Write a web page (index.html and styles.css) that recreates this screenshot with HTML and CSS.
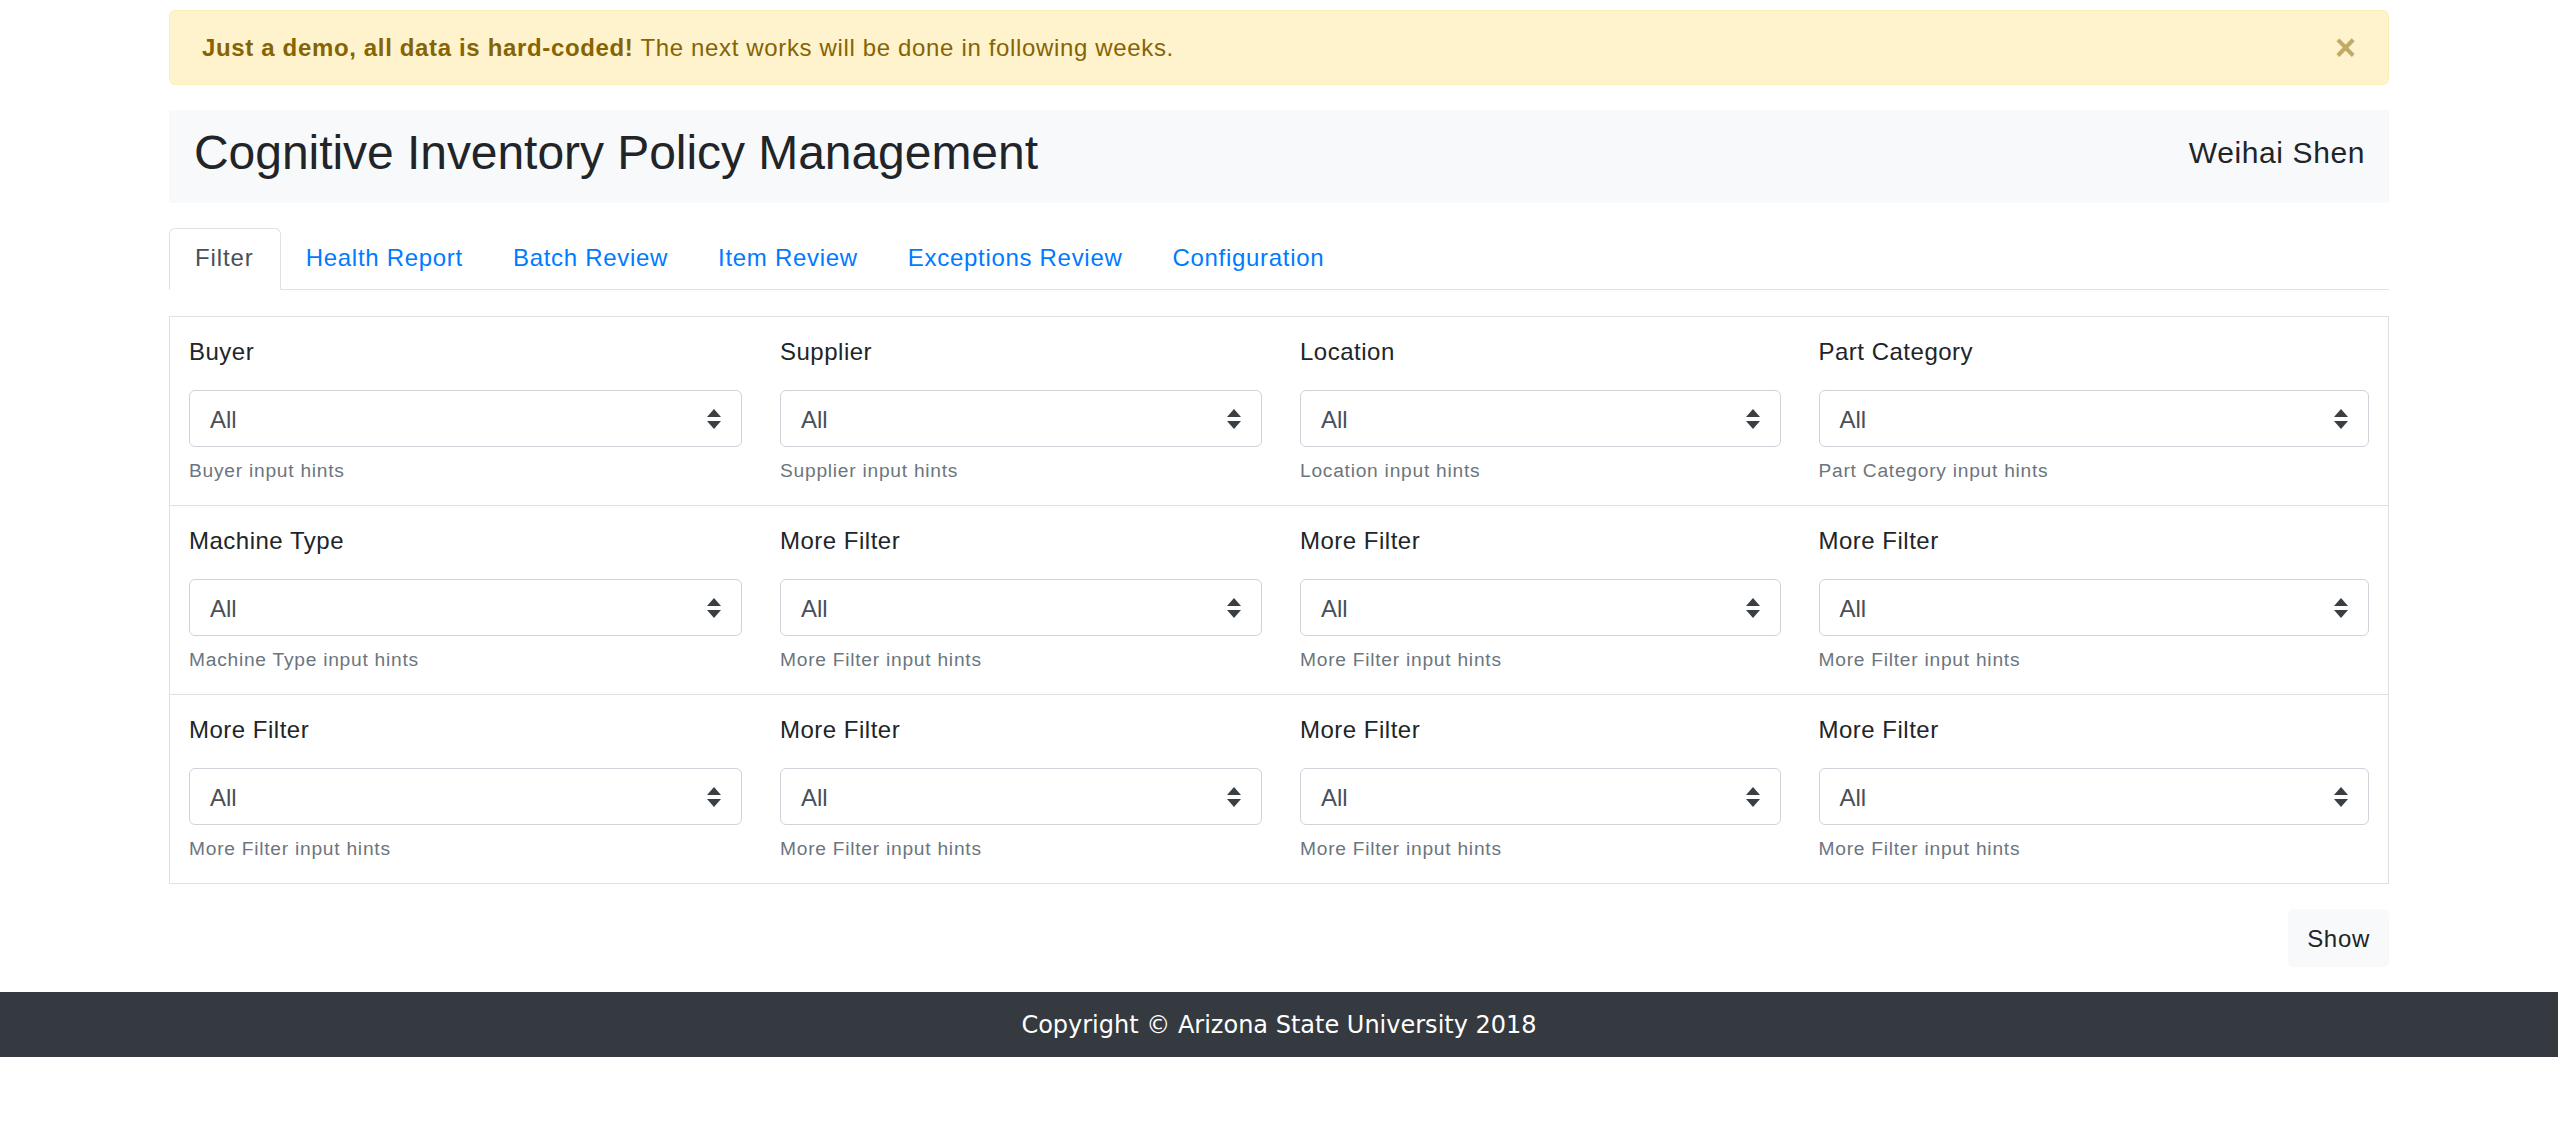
FILE: index.html
```html
<!DOCTYPE html>
<html lang="en">
<head>
<meta charset="utf-8">
<title>Cognitive Inventory Policy Management</title>
<link rel="stylesheet" href="styles.css">
</head>
<body>
<div class="page">
  <div class="container">
    <div class="alert">
      <strong>Just a demo, all data is hard-coded!</strong> The next works will be done in following weeks.
      <span class="close">&times;</span>
    </div>

    <header class="topbar">
      <h2 class="title">Cognitive Inventory Policy Management</h2>
      <span class="user">Weihai Shen</span>
    </header>

    <ul class="tabs">
      <li class="tab active">Filter</li>
      <li class="tab">Health Report</li>
      <li class="tab">Batch Review</li>
      <li class="tab">Item Review</li>
      <li class="tab">Exceptions Review</li>
      <li class="tab">Configuration</li>
    </ul>

    <div class="filters">
      <div class="frow">
        <div class="cell"><div class="lbl">Buyer</div><div class="sel"><span>All</span><svg class="arr" width="16" height="20" viewBox="0 0 16 20"><path d="M8 0L15 8H1Z M8 20L15 12H1Z" fill="#3a3f44"/></svg></div><div class="hint">Buyer input hints</div></div>
        <div class="cell"><div class="lbl">Supplier</div><div class="sel"><span>All</span><svg class="arr" width="16" height="20" viewBox="0 0 16 20"><path d="M8 0L15 8H1Z M8 20L15 12H1Z" fill="#3a3f44"/></svg></div><div class="hint">Supplier input hints</div></div>
        <div class="cell"><div class="lbl">Location</div><div class="sel"><span>All</span><svg class="arr" width="16" height="20" viewBox="0 0 16 20"><path d="M8 0L15 8H1Z M8 20L15 12H1Z" fill="#3a3f44"/></svg></div><div class="hint">Location input hints</div></div>
        <div class="cell"><div class="lbl">Part Category</div><div class="sel"><span>All</span><svg class="arr" width="16" height="20" viewBox="0 0 16 20"><path d="M8 0L15 8H1Z M8 20L15 12H1Z" fill="#3a3f44"/></svg></div><div class="hint">Part Category input hints</div></div>
      </div>
      <div class="frow">
        <div class="cell"><div class="lbl">Machine Type</div><div class="sel"><span>All</span><svg class="arr" width="16" height="20" viewBox="0 0 16 20"><path d="M8 0L15 8H1Z M8 20L15 12H1Z" fill="#3a3f44"/></svg></div><div class="hint">Machine Type input hints</div></div>
        <div class="cell"><div class="lbl">More Filter</div><div class="sel"><span>All</span><svg class="arr" width="16" height="20" viewBox="0 0 16 20"><path d="M8 0L15 8H1Z M8 20L15 12H1Z" fill="#3a3f44"/></svg></div><div class="hint">More Filter input hints</div></div>
        <div class="cell"><div class="lbl">More Filter</div><div class="sel"><span>All</span><svg class="arr" width="16" height="20" viewBox="0 0 16 20"><path d="M8 0L15 8H1Z M8 20L15 12H1Z" fill="#3a3f44"/></svg></div><div class="hint">More Filter input hints</div></div>
        <div class="cell"><div class="lbl">More Filter</div><div class="sel"><span>All</span><svg class="arr" width="16" height="20" viewBox="0 0 16 20"><path d="M8 0L15 8H1Z M8 20L15 12H1Z" fill="#3a3f44"/></svg></div><div class="hint">More Filter input hints</div></div>
      </div>
      <div class="frow">
        <div class="cell"><div class="lbl">More Filter</div><div class="sel"><span>All</span><svg class="arr" width="16" height="20" viewBox="0 0 16 20"><path d="M8 0L15 8H1Z M8 20L15 12H1Z" fill="#3a3f44"/></svg></div><div class="hint">More Filter input hints</div></div>
        <div class="cell"><div class="lbl">More Filter</div><div class="sel"><span>All</span><svg class="arr" width="16" height="20" viewBox="0 0 16 20"><path d="M8 0L15 8H1Z M8 20L15 12H1Z" fill="#3a3f44"/></svg></div><div class="hint">More Filter input hints</div></div>
        <div class="cell"><div class="lbl">More Filter</div><div class="sel"><span>All</span><svg class="arr" width="16" height="20" viewBox="0 0 16 20"><path d="M8 0L15 8H1Z M8 20L15 12H1Z" fill="#3a3f44"/></svg></div><div class="hint">More Filter input hints</div></div>
        <div class="cell"><div class="lbl">More Filter</div><div class="sel"><span>All</span><svg class="arr" width="16" height="20" viewBox="0 0 16 20"><path d="M8 0L15 8H1Z M8 20L15 12H1Z" fill="#3a3f44"/></svg></div><div class="hint">More Filter input hints</div></div>
      </div>
    </div>

    <div class="actions">
      <button class="btn">Show</button>
    </div>
  </div>

  <footer class="footer">Copyright &copy; Arizona State University 2018</footer>
</div>
</body>
</html>
```

FILE: styles.css
```css
* { box-sizing: border-box; }

html, body {
  margin: 0;
  padding: 0;
  background: #fff;
}

body {
  font-family: "Liberation Sans", Arial, sans-serif;
  font-size: 24px;
  line-height: 36px;
  color: #212529;
}

.container {
  width: 2220px;
  margin: 0 auto;
  padding-top: 10px;
}

.alert {
  position: relative;
  background: #fff3cd;
  border: 1px solid #ffeeba;
  border-radius: 6px;
  color: #856404;
  padding: 18px 30px 18px 32px;
  line-height: 37px;
  letter-spacing: 0.65px;
}

.alert strong { font-weight: bold; }

.close {
  position: absolute;
  top: 0;
  right: 0;
  padding: 18px 32px;
  font-size: 36px;
  font-weight: bold;
  line-height: 37px;
  color: #856404;
  opacity: 0.5;
  letter-spacing: 0;
}

.topbar {
  margin-top: 25px;
  height: 93px;
  background: #f8f9fa;
  display: flex;
  align-items: center;
  justify-content: space-between;
  padding: 0 24px 8px 25px;
}

.title {
  margin: 0;
  font-size: 48px;
  line-height: 58px;
  font-weight: normal;
  letter-spacing: -0.05px;
  color: #212529;
}

.user {
  font-size: 30px;
  line-height: 36px;
  letter-spacing: 0.6px;
  color: #212529;
}

.tabs {
  list-style: none;
  margin: 25px 0 0;
  padding: 0;
  display: flex;
  border-bottom: 1px solid #dee2e6;
}

.tab {
  padding: 11px 24px 13px;
  line-height: 36px;
  border: 1px solid transparent;
  border-radius: 6px 6px 0 0;
  margin-bottom: -1px;
  color: #007bff;
  letter-spacing: 0.7px;
}

.tab.active {
  color: #495057;
  background: #fff;
  border-color: #dee2e6 #dee2e6 #fff;
  padding-left: 25px;
  padding-right: 26px;
  letter-spacing: 0.9px;
}

.filters {
  margin-top: 26px;
  border: 1px solid #dee2e6;
}

.frow {
  display: grid;
  grid-template-columns: 591fr 520fr 518.5fr 588.5fr;
}

.frow + .frow {
  border-top: 1px solid #dee2e6;
}

.cell {
  padding: 17px 19px 20px;
}

.lbl {
  line-height: 36px;
  margin-bottom: 20px;
  letter-spacing: 0.5px;
}

.sel {
  height: 57px;
  border: 1px solid #ced4da;
  border-radius: 6px;
  background: #fff;
  display: flex;
  align-items: center;
  justify-content: space-between;
  padding: 0 19px 0 20px;
  color: #495057;
  line-height: 36px;
}

.sel span {
  padding-top: 2px;
}

.arr {
  display: block;
  flex: none;
}

.hint {
  margin-top: 9px;
  font-size: 19.2px;
  line-height: 29px;
  color: #6c757d;
  letter-spacing: 0.75px;
}

.actions {
  display: flex;
  justify-content: flex-end;
  margin-top: 25px;
}

.btn {
  font-family: "Liberation Sans", Arial, sans-serif;
  font-size: 24px;
  line-height: 36px;
  letter-spacing: 0.7px;
  color: #212529;
  background: #f8f9fa;
  border: 1px solid #f8f9fa;
  border-radius: 6px;
  padding: 11px 18px 9px;
  margin: 0;
}

.footer {
  margin-top: 25px;
  height: 65px;
  line-height: 67px;
  background: #343a40;
  color: #fff;
  text-align: center;
  font-family: "DejaVu Sans", sans-serif;
  font-size: 24px;
}
```
